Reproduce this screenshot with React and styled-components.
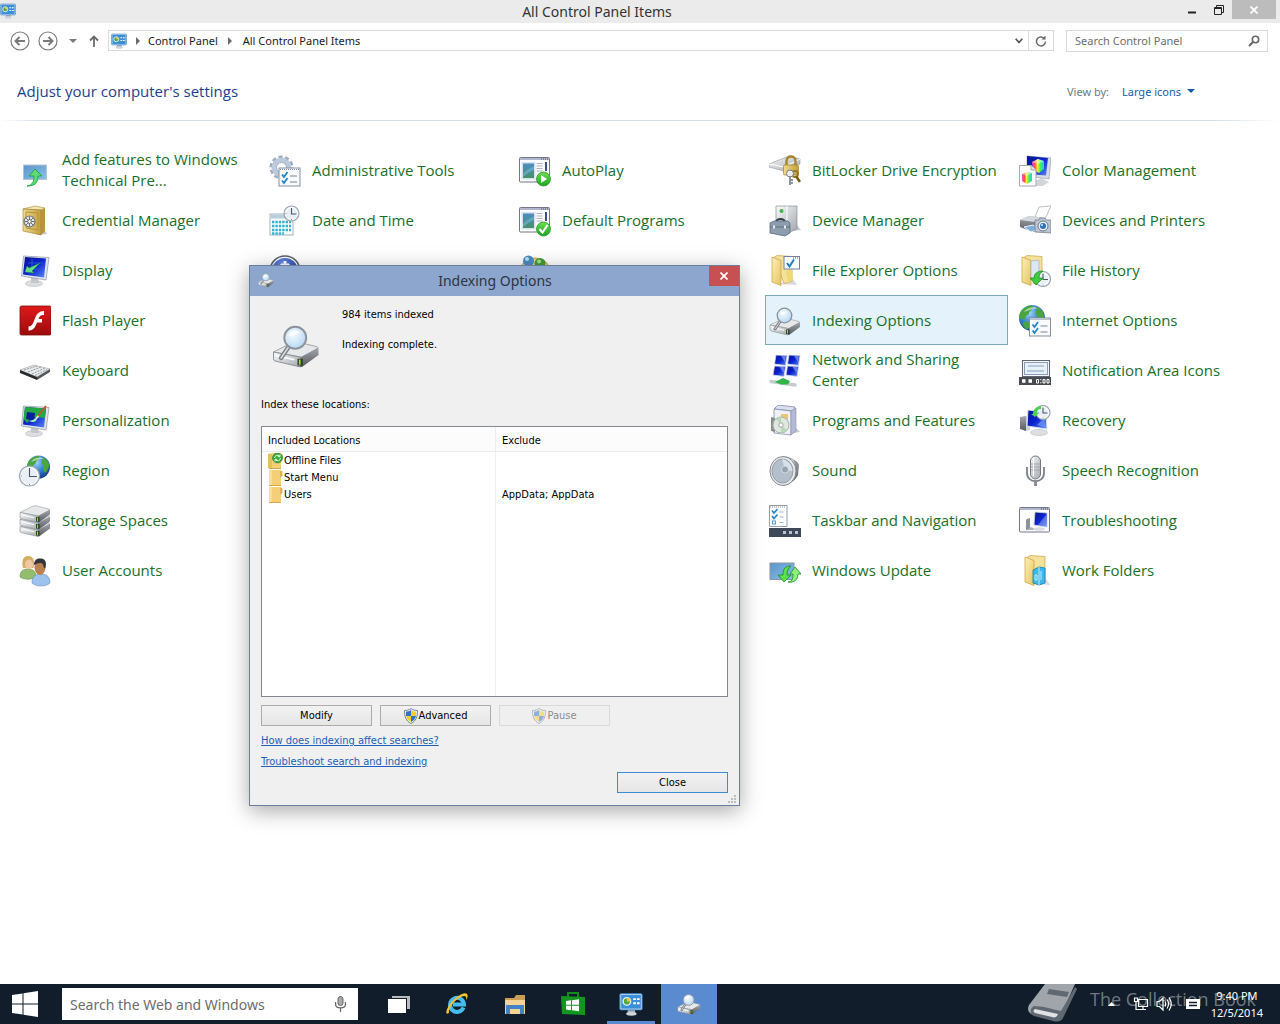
import React from "react";
import styled, { createGlobalStyle, css } from "styled-components";

const ui = `"Noto Sans", "Open Sans", sans-serif`;
const display = `"Open Sans", "Noto Sans", sans-serif`;
const classic = `"DejaVu Sans Condensed", "Noto Sans", sans-serif`;

const GlobalStyle = createGlobalStyle`
  *, *::before, *::after { box-sizing: border-box; }
  html, body { margin: 0; padding: 0; }
  body { font-family: ${ui}; background: #fff; color: #000; overflow: hidden; }
  button, input, select { font: inherit; color: inherit; margin: 0; padding: 0; border: 0; background: none; border-radius: 0; }
  svg { display: block; flex: none; }
`;

/* ---------- shared drawing parts ---------- */

const Defs = () => (
  <svg width="0" height="0" aria-hidden="true">
    <defs>
      <linearGradient id="steel" x1="0" y1="0" x2="1" y2="1">
        <stop offset="0" stopColor="#fafbfc" /><stop offset="1" stopColor="#a3a8ae" />
      </linearGradient>
      <linearGradient id="dark" x1="0" y1="0" x2="0" y2="1">
        <stop offset="0" stopColor="#a4a7ac" /><stop offset="1" stopColor="#565a60" />
      </linearGradient>
      <linearGradient id="sky" x1="0" y1="0" x2="1" y2="1">
        <stop offset="0" stopColor="#5d93cc" /><stop offset="1" stopColor="#86c4e6" />
      </linearGradient>
      <linearGradient id="screen" x1="0" y1="0" x2="1" y2="1">
        <stop offset="0" stopColor="#0a1590" /><stop offset=".5" stopColor="#0b22cf" /><stop offset="1" stopColor="#5d8cf5" />
      </linearGradient>
      <linearGradient id="green" x1="0" y1="0" x2="0" y2="1">
        <stop offset="0" stopColor="#6fdc50" /><stop offset="1" stopColor="#1fa326" />
      </linearGradient>
      <linearGradient id="fold" x1="0" y1="0" x2="1" y2="1">
        <stop offset="0" stopColor="#fdf0b4" /><stop offset="1" stopColor="#e6c463" />
      </linearGradient>
      <linearGradient id="gold" x1="0" y1="0" x2="1" y2="0">
        <stop offset="0" stopColor="#efdc8c" /><stop offset="1" stopColor="#c49d3c" />
      </linearGradient>
      <linearGradient id="flash" x1="0" y1="0" x2="0" y2="1">
        <stop offset="0" stopColor="#e0191b" /><stop offset="1" stopColor="#9c0a0c" />
      </linearGradient>
      <linearGradient id="rainbow" x1="0" y1="0" x2="1" y2="0">
        <stop offset="0" stopColor="#ff4be0" /><stop offset=".25" stopColor="#ff5040" /><stop offset=".45" stopColor="#ffee30" />
        <stop offset=".7" stopColor="#3df05a" /><stop offset="1" stopColor="#25c8ff" />
      </linearGradient>
      <linearGradient id="photo" x1="0" y1="0" x2="0" y2="1">
        <stop offset="0" stopColor="#4d8dc4" /><stop offset="1" stopColor="#47906b" />
      </linearGradient>
      <radialGradient id="globe" cx=".4" cy=".3" r=".75">
        <stop offset="0" stopColor="#9fd6f8" /><stop offset=".5" stopColor="#3a83d4" /><stop offset="1" stopColor="#123a86" />
      </radialGradient>
      <radialGradient id="ball" cx=".4" cy=".25" r=".8">
        <stop offset="0" stopColor="#6b92ee" /><stop offset="1" stopColor="#14298c" />
      </radialGradient>
      <radialGradient id="lens" cx=".4" cy=".35" r=".7">
        <stop offset="0" stopColor="#f4fbff" /><stop offset="1" stopColor="#b6d6f2" />
      </radialGradient>
    </defs>
  </svg>
);

const Clock = ({ x, y, r }) => (
  <g transform={`translate(${x} ${y})`}>
    <circle r={r} fill="#e9eff5" stroke="#9ba6b2" strokeWidth="1.2" />
    <circle r={r - 1.6} fill="none" stroke="#fff" />
    <path d={`M0 ${-r + 2}V0.5H${r - 2.5}`} fill="none" stroke="#4a5765" strokeWidth="1.1" />
    <path d={`M0 ${r - 2}v1M${-r + 1.5} 0h1`} stroke="#7d8996" />
  </g>
);
const Globe = ({ x, y, r }) => (
  <g transform={`translate(${x} ${y}) scale(${r / 11})`}>
    <circle r="11" fill="url(#globe)" />
    <path d="M-9.500-5C-7-9-3-10.500 0-10.500 2-9 0-7-1.500-6S-2-3-4-2.500-5 0-6 1-9 0-10.500 1C-11-1-10.500-3.500-9.500-5ZM4-9.500C7-8.500 10-5 10.500-1 9 1 8.500 4 7 5S4 3 4.500 0 2-3 3-5 3.500-8 4-9.500ZM-6 3C-3 3-1 5-1 6S-3 9-4 9.500-8 6-8 5-7 3-6 3Z" fill="#49a53c" />
    <path d="M-7-5C-4-9 2-10 5-8 1-8-4-6-7-5Z" fill="#fff" opacity=".55" />
  </g>
);
const Checklist = ({ x, y }) => (
  <g transform={`translate(${x} ${y})`}>
    <rect width="21" height="18" fill="#f8fafd" stroke="#848fa3" />
    <path d="M1 1.500h19" stroke="#7a88a8" strokeDasharray="1 1" />
    <path d="M3 6.500l2 2.500 3.500-5M3 12.500l2 2.500 3.500-5" fill="none" stroke="#2086c9" strokeWidth="1.8" />
    <path d="M11 8h7M11 14h7" stroke="#7d8593" strokeWidth="1.2" />
  </g>
);
const Monitor = ({ children }) => (
  <>
    <ellipse cx="15" cy="28.500" rx="8.500" ry="3" fill="#dcdfe2" stroke="#b4b8bd" strokeWidth=".6" />
    <path d="M12 22l7 1 1 5h-8Z" fill="#c3c7cc" />
    <path d="M4.500 1L30 2.500 27 25 2.500 21Z" fill="#dfe4ea" stroke="#9aa1ab" strokeWidth=".8" />
    <path d="M6 2L27 3.500 25 22.500 4 19.500Z" fill="url(#screen)" />
    {children}
  </>
);
const Frame = ({ children }) => (
  <>
    <rect x=".5" y="2.500" width="30" height="24.500" rx="1" fill="#fbfcfe" stroke="#737789" />
    <path d="M1 4h29" stroke="#b3b7cb" strokeWidth="2" />
    <path d="M22 4h7" stroke="#50546a" strokeDasharray="1 1" />
    {children}
  </>
);
const PhotoFrame = ({ children }) => (
  <Frame>
    <rect x="2.500" y="7" width="14" height="17.500" fill="#d9e0ec" />
    <rect x="4" y="8.500" width="11" height="14.500" fill="url(#photo)" />
    <path d="M4 19C8 14 12 13 15 11v4C11 16 7 20 4 22Z" fill="#79b3d8" opacity=".6" />
    <path d="M17.500 8.500h6M17.500 11h6M17.500 13.500h6M17.500 16h6" stroke="#b0b4bd" />
    <path d="M27 7v9" stroke="#384f87" strokeWidth="2" />
    {children}
  </Frame>
);
const FolderShape = () => (
  <>
    <path d="M10 29l18 1-4-6Z" fill="#c9ccd2" opacity=".7" />
    <path d="M5 2.500l3-2 15 1v25l-8 2Z" fill="#f5e29a" stroke="#c7a24b" strokeWidth=".7" />
    <path d="M3 2l9 3.500v25L3 27Z" fill="url(#fold)" stroke="#c59d40" strokeWidth=".7" />
  </>
);
const DriveShape = ({ y = 0 }) => (
  <g transform={`translate(0 ${y})`}>
    <path d="M1 20L13 14Q15 13 17 13.300L30 16.500Q31 17 30 17.800L20 23.500Z" fill="#e6e8ea" stroke="#9a9ea3" strokeWidth=".6" />
    <path d="M1 20l18 3.500v6.500L2 26Q1 25.500 1 24.500Z" fill="url(#steel)" stroke="#85898e" strokeWidth=".6" />
    <path d="M19 23.500l12-6.500v5L20 30H19Z" fill="url(#dark)" />
    <path d="M17 24.500h3.500v4.500H17Z" fill="#2d3a22" /><path d="M18.500 25v3.500" stroke="#8fe03c" strokeWidth="1.2" />
    <path d="M3 22.500l12 2.700" stroke="#fff" />
  </g>
);
const Indexing = () => (
  <>
    <DriveShape />
    <path d="M11.500 16L6 24" stroke="#7c8289" strokeWidth="3" strokeLinecap="round" />
    <path d="M11.500 16L6 24" stroke="#d8dce0" strokeWidth="1" strokeLinecap="round" />
    <circle cx="15.500" cy="10.500" r="7.300" fill="url(#lens)" stroke="#8b939c" strokeWidth="1.300" />
    <path d="M11 9c2-4 6-4 8-2-3 0-5 4-8 2Z" fill="#fff" />
  </>
);
const ControlPanel = () => (
  <>
    <path d="M12 23h9l1 6H11Z" fill="#aab4bf" />
    <ellipse cx="16.500" cy="29" rx="7" ry="2.500" fill="#cfd5db" />
    <rect x="1" y="2" width="30" height="22" rx="2" fill="#a9cdec" stroke="#3272b0" />
    <rect x="3" y="4" width="26" height="18" fill="#3b8fd8" />
    <circle cx="10.500" cy="12.500" r="5" fill="#4fa83e" stroke="#e9f4ff" strokeWidth="1.800" />
    <path d="M10.500 12.500V7.500A5 5 0 0 1 15.500 12.500Z" fill="#f1c84d" />
    <path d="M19 9.500h3.500M24 9.500h3.500M19 15h3.500M24 15h3.500" stroke="#fff" strokeWidth="2.400" />
  </>
);
const People = ({ a, b, ca, cb }) => (
  <>
    <path d="M1 22c0-6 3-8 8-8s8 2 8 8c-4 3-12 3-16 0Z" fill={ca} stroke="#5f8546" strokeWidth=".5" />
    <path d="M4 13C2 4 5 1 9.500 1S16 5 14.500 13Z" fill={a} />
    <ellipse cx="10" cy="9.500" rx="4" ry="5" fill="#efc7a0" />
    <path d="M13 28c0-6 3-9 9-9s9 3 9 9c-4 4-14 4-18 0Z" fill={cb} stroke="#5c7fb0" strokeWidth=".5" />
    <ellipse cx="21" cy="12.500" rx="5.500" ry="7.500" fill="#b98150" />
    <path d="M15 10c0-6 4-7 7-6.500 5 .5 6 5 4 10-2-1-1-4-3-5s-5 0-8 1.500Z" fill={b} />
  </>
);

const glyphs = {
  addFeatures: (
    <>
      <rect x="4.500" y="10" width="23" height="14.500" fill="url(#sky)" stroke="#b9c4cf" />
      <path d="M8 31c6-1 7-5 7-10h-5l6-7 7 7h-4c0 7-3 10-11 10Z" fill="#5fdc78" stroke="#159a38" strokeWidth=".8" />
    </>
  ),
  admin: (
    <>
      <circle cx="12.500" cy="12.500" r="10.500" fill="none" stroke="#9aabbf" strokeWidth="3" strokeDasharray="4 2.600" />
      <circle cx="12.500" cy="12.500" r="7.500" fill="none" stroke="#bccbdb" strokeWidth="5" />
      <circle cx="12.500" cy="12.500" r="5" fill="#fff" stroke="#9aabbf" />
      <Checklist x={10} y={13} />
    </>
  ),
  autoplay: (
    <PhotoFrame>
      <circle cx="24.500" cy="24" r="7" fill="url(#green)" stroke="#2a9a2c" strokeWidth=".8" />
      <path d="M22 20l6 4-6 4Z" fill="#fff" />
    </PhotoFrame>
  ),
  defaults: (
    <PhotoFrame>
      <circle cx="24.500" cy="24" r="7" fill="url(#green)" stroke="#2a9a2c" strokeWidth=".8" />
      <path d="M20.500 24l3 3.500 5-7.500" fill="none" stroke="#fff" strokeWidth="2" />
    </PhotoFrame>
  ),
  bitlocker: (
    <>
      <path d="M0 9L20 1l11 3v5L15 16 0 12Z" fill="url(#steel)" stroke="#9296a0" strokeWidth=".6" />
      <path d="M0 9l15 3 16-8" fill="none" stroke="#fff" />
      <path d="M17.500 11V6c0-6 9-6 9 0v5" fill="none" stroke="#a8852c" strokeWidth="2.400" />
      <rect x="14.500" y="10" width="15" height="10" rx="1.500" fill="url(#gold)" stroke="#a37f28" strokeWidth=".7" />
      <circle cx="26" cy="19" r="3" fill="none" stroke="#9a7824" strokeWidth="1.800" />
      <path d="M27 21l4 6" stroke="#7a5b14" strokeWidth="2.600" />
      <circle cx="21" cy="18.500" r="3.500" fill="#eceef0" stroke="#777d85" />
      <path d="M21 21v9M21 25h3M21 28h3" stroke="#8d939b" strokeWidth="2" />
    </>
  ),
  color: (
    <>
      <path d="M14 27l8-4 8 4-6 4H14Z" fill="#d3d6db" />
      <path d="M8 1L32 3 30 24 8 21Z" fill="#d7dde6" stroke="#9ba3af" strokeWidth=".7" />
      <path d="M8 1L29 3 27 20.500 8 19Z" fill="url(#screen)" />
      <path d="M13 7l6-3 6 2v8l-5 4-6-3Z" fill="url(#rainbow)" />
      <path d="M13 7l6-3 6 2-6 3Z" fill="#fff" opacity=".45" />
      <path d="M.5 10.500H12L17 15v16H.5Z" fill="#fdfdfe" stroke="#a5a9b0" />
      <path d="M12 10.500V15h5" fill="#dfe3e8" stroke="#a5a9b0" />
      <path d="M3 19l5-2 5 1v8l-5 3-5-3Z" fill="url(#rainbow)" />
      <path d="M3 19l5-2 5 1-5 3Z" fill="#fff" opacity=".45" />
    </>
  ),
  credential: (
    <>
      <path d="M18 30l10-1-3-5Z" fill="#c7c7c7" />
      <path d="M4 4L16 1l10 2-4 2Z" fill="#f4e8b0" stroke="#a88a3b" strokeWidth=".6" />
      <path d="M4 4l18 1v25L4 26Z" fill="url(#gold)" stroke="#9b7a2c" strokeWidth=".6" />
      <path d="M22 5l4-2v23l-4 4Z" fill="#b8943f" />
      <path d="M7 7l12 1v17L7 23Z" fill="none" stroke="#b3923e" />
      <circle cx="10.500" cy="16.500" r="5.500" fill="#e4e6e8" stroke="#72777c" strokeWidth="1.200" />
      <path d="M10.500 11.500v10M5.500 16.500h10M7 13l7 7M14 13l-7 7" stroke="#6a6f74" />
      <circle cx="10.500" cy="16.500" r="1.800" fill="#fff" stroke="#666" />
    </>
  ),
  date: (
    <>
      <rect x="1" y="9" width="23" height="21" fill="#fdfefe" stroke="#9fb4c1" />
      <path d="M1.500 9.500h22v4h-22Z" fill="#b7cfdd" />
      <path d="M3 17h19M3 21h19M3 25h19M3 28.500h12" stroke="#34b1cf" strokeWidth="2.400" strokeDasharray="2.400 1" />
      <Clock x={22.500} y={8.500} r={7.500} />
    </>
  ),
  device: (
    <>
      <path d="M20 26l12-1-4-5Z" fill="#c5c8cc" />
      <path d="M7 1h21v23l-7 3H7Z" fill="url(#steel)" stroke="#8b9096" strokeWidth=".7" />
      <path d="M18 1v24" stroke="#fff" /><circle cx="12.500" cy="6" r="2" fill="#43b34a" />
      <path d="M7 17c1-4 8-4 9 0" fill="none" stroke="#333b44" strokeWidth="1.800" />
      <path d="M1 18l4-2h14l2 2v10l-5 3L1 28Z" fill="#8b9dae" stroke="#5b6a78" strokeWidth=".8" />
      <path d="M1 22h20" stroke="#5f6e7c" /><path d="M5 20.500v3M16 20.500v3" stroke="#e5ebf0" strokeWidth="2" />
    </>
  ),
  printers: (
    <>
      <path d="M16 12L20 2l12-1-6 13Z" fill="#fff" stroke="#aab0b9" strokeWidth=".8" />
      <path d="M1 15l9-4 16 2v10l-12 4L1 22Z" fill="url(#dark)" />
      <path d="M1 15l9-4 16 2-10 4Z" fill="#d4d9df" />
      <path d="M5 22l9-2 6 4-8 3Z" fill="#7db0dc" stroke="#eef3f8" />
      <path d="M16 15h4l1-2h5l1 2h5v13l-16-1Z" fill="#bcc5d2" stroke="#6b7686" strokeWidth=".7" />
      <circle cx="24" cy="21" r="5" fill="#eef2f7" stroke="#6a778a" />
      <circle cx="24" cy="21" r="3" fill="#2c6fbd" /><circle cx="23" cy="20" r="1" fill="#d9ecff" />
    </>
  ),
  display: (
    <Monitor>
      <path d="M9 8h15M8 14h15M13 4v14" stroke="#2452d8" strokeWidth="1.200" />
      <path d="M6 17l2-6 2 2 11-5-8 8 2 2Z" fill="#62e07f" stroke="#1b8f3a" strokeWidth=".5" />
    </Monitor>
  ),
  ease: (
    <>
      <circle cx="16" cy="16" r="15" fill="#fff" stroke="#59606c" strokeWidth="1.500" />
      <circle cx="16" cy="16" r="13" fill="url(#ball)" />
      <path d="M16 6v14M12 9l4 4 4-4" stroke="#fff" strokeWidth="3" fill="none" />
    </>
  ),
  family: (
    <>
      <ellipse cx="16" cy="16" rx="15" ry="13" fill="#f1d585" stroke="#c99f3a" />
      <circle cx="9.500" cy="6" r="5.500" fill="#4a8cc4" /><circle cx="8" cy="4" r="2" fill="#b9dcf5" />
      <circle cx="21" cy="8.500" r="5.500" fill="#3f9d3a" /><circle cx="20" cy="6.500" r="2" fill="#a6e08b" />
    </>
  ),
  explorerOptions: (
    <>
      <FolderShape />
      <path d="M17 16l6-1 1 10-5 3Z" fill="#f0d878" />
      <rect x="15" y="1.500" width="15.500" height="12.500" fill="#fafcff" stroke="#7480a0" />
      <path d="M24 3h5" stroke="#50546a" strokeDasharray="1 1" />
      <path d="M18 8l2.500 3.500L25 4.500" fill="none" stroke="#1b7fc4" strokeWidth="2" />
    </>
  ),
  history: (
    <>
      <FolderShape />
      <path d="M12 6l8-1v18l-8 2Z" fill="#dbe7f3" stroke="#93a6bd" strokeWidth=".6" />
      <Clock x={24} y={24} r={7.500} />
      <path d="M11 23h4c0-5 4-7 9-7-3 2-4 4-4 7h4l-7 7Z" fill="#3ecb3e" stroke="#138a1d" strokeWidth=".7" />
    </>
  ),
  flash: (
    <>
      <rect x="1" y="1" width="31" height="29" rx="1.500" fill="url(#flash)" stroke="#7d0d0e" strokeWidth=".8" />
      <path d="M25 6v4c-4 0-4.500 1.500-5.500 4h3.500v3.500h-5C16 23 14 25.500 9.500 25.500v-4c3.500 0 4.500-3 6-7S19 6 25 6Z" fill="#fff" />
    </>
  ),
  indexing: <Indexing />,
  internet: (
    <>
      <Globe x={13} y={13} r={13} />
      <Checklist x={10.500} y={13} />
    </>
  ),
  keyboard: (
    <>
      <path d="M1 15L15 10l16 4-13 8Z" fill="#e8eaec" stroke="#9a9ea3" strokeWidth=".6" />
      <path d="M1 15l17 7v3L1 18Z" fill="#26292d" /><path d="M18 22l13-8v3l-13 8Z" fill="#55595e" />
      <path d="M5 15l13-4M9 17l13-5M13 19l13-6M16 20.500l12-6" stroke="#8b8f95" strokeWidth=".9" strokeDasharray="2 1" />
    </>
  ),
  network: (
    <>
      {[[6, 0], [19, 0], [4.500, 11], [17.500, 11]].map(([x, y]) => (
        <g key={`${x}-${y}`} transform={`translate(${x} ${y})`}>
          <path d="M1 0l11 .5-1.500 10L-.5 9Z" fill="url(#screen)" stroke="#d4dae4" strokeWidth=".8" />
          <path d="M6 1l5 0-1 6Z" fill="#bcd0ff" opacity=".5" />
        </g>
      ))}
      <path d="M2 26.500l24 3.500" stroke="#c6ccd0" strokeWidth="3.500" strokeLinecap="round" />
      <path d="M6 27l8-4 7 3-2 3.500-7 0Z" fill="#32b44a" />
    </>
  ),
  notification: (
    <>
      <rect x="3.500" y="5.500" width="27" height="16" fill="#f5f9fd" stroke="#5e6575" />
      <rect x="5.500" y="7.500" width="23" height="12" fill="#e8f1fa" stroke="#8d9cb8" />
      <path d="M9 11h16M8 16h17" stroke="#7e9dc2" strokeWidth="1.200" />
      <rect x="0" y="22" width="32" height="8" fill="#484c51" />
      <path d="M3 26h3.500M9.500 26H13" stroke="#fff" strokeWidth="3.500" />
      <path d="M17.500 24.500h2v3.500h-2ZM24 24.500h2v3.500h-2ZM28 24.500h2v3.500h-2Z" fill="none" stroke="#fff" />
      <path d="M21.800 24v1.300M21.800 27v1.300" stroke="#fff" />
    </>
  ),
  personalization: (
    <Monitor>
      <path d="M6 2L27 3.500 26 13 14 12 8 18 4.500 14Z" fill="#22a844" />
      <path d="M8 7l8 1-1 8-8-2Z" fill="#0a1f9a" />
      <path d="M10 16c3-1 5-1 6-3l2 1c-1 3-4 4-8 2Z" fill="#a3efc0" />
      <path d="M19 11L27 1" stroke="#c5542c" strokeWidth="2" /><path d="M17 13.500l2.500-2.500" stroke="#e5d9cf" strokeWidth="2" />
    </Monitor>
  ),
  programs: (
    <>
      <path d="M20 29l11-2-4-4Z" fill="#c6c8d0" />
      <path d="M5 4l4-4 17 2-2 4Z" fill="#dbe0f0" stroke="#8489a5" strokeWidth=".8" />
      <path d="M5 4l17 2v24L5 28Z" fill="#eff1f9" stroke="#888dab" strokeWidth=".8" />
      <path d="M22 6l5-3v23l-5 4Z" fill="#b4b9d6" stroke="#888dab" strokeWidth=".6" />
      <rect x="12" y="9" width="7" height="8" fill="#edc375" />
      <path d="M2 12l4 1v14l-4-1Z" fill="#8a8f8c" />
      <circle cx="12" cy="20" r="8" fill="#dfe8e0" stroke="#a7b1ac" />
      <path d="M12 20L7 14a8 8 0 0 1 5-2ZM12 20l6 5a8 8 0 0 1-6 3Z" fill="#b9d9b6" />
      <circle cx="12" cy="20" r="2.200" fill="#fff" stroke="#9aa59f" />
    </>
  ),
  recovery: (
    <>
      <path d="M1 12l6-1v15l-6-2Z" fill="url(#dark)" /><path d="M7 11l4 1v13l-4 1Z" fill="#cdd2d8" />
      <ellipse cx="20" cy="27.500" rx="8.500" ry="3" fill="#dcdfe3" stroke="#b3b8be" strokeWidth=".6" />
      <path d="M9 5l18 2 1 17-20-3Z" fill="url(#screen)" stroke="#d9dfe7" />
      <path d="M18 20l8-8 1 11Z" fill="#7da2f7" opacity=".6" />
      <Clock x={24} y={7.500} r={7} />
      <path d="M14 9c0-5 4-8 8-8v3c-3 0-4 2-4 4h2l-4 4-4-3Z" fill="#4cd054" />
    </>
  ),
  region: (
    <>
      <Globe x={19.500} y={12} r={11.500} />
      <Clock x={10.500} y={21} r={10} />
    </>
  ),
  sound: (
    <>
      <path d="M14 1C22 2 29 6 30 10l-1 10c-2 5-8 9-15 11Z" fill="url(#dark)" />
      <path d="M22 4c5 4 5 19-1 24" fill="none" stroke="#e5e7ea" strokeWidth="1.500" />
      <ellipse cx="14" cy="16" rx="13" ry="14.500" fill="#e7eaed" stroke="#858b91" />
      <ellipse cx="13.500" cy="16" rx="10.500" ry="12" fill="#b3c0cc" stroke="#949ca4" />
      <path d="M13 4c6 1 10 6 10.500 12L16 15Z" fill="#d6e0e9" />
      <circle cx="16" cy="14.500" r="3.500" fill="#97a3af" stroke="#eff3f6" strokeWidth=".6" />
    </>
  ),
  speech: (
    <>
      <path d="M8 12v6c0 11 17 11 17 0v-6" fill="none" stroke="#7e8087" strokeWidth="1.800" />
      <path d="M16.500 25v6" stroke="#8b8e95" strokeWidth="3" />
      <rect x="11.500" y="1" width="10" height="23" rx="5" fill="url(#steel)" stroke="#74777f" />
      <path d="M12 9h9M12 12h9M12 15h9" stroke="#9a9da6" strokeWidth=".9" />
      <path d="M14.500 3v18" stroke="#fff" />
    </>
  ),
  storage: (
    <>
      <DriveShape y={1.500} /><DriveShape y={-5.500} /><DriveShape y={-12.500} />
    </>
  ),
  taskbar: (
    <>
      <path d="M.5.5H18V21.500H.5Z" fill="#fcfdff" stroke="#969cab" />
      <path d="M1 2h16" stroke="#8990a4" strokeDasharray="1 1" />
      <path d="M3 5.500l2 2.500 3.500-4M3 11l2 2.500 3.500-4" fill="none" stroke="#2086c9" strokeWidth="1.600" />
      <rect x="3.500" y="16" width="3" height="3" fill="none" stroke="#4c9fd0" />
      <path d="M10.500 7h4M10.500 12h4M10.500 17.500h4" stroke="#a8adb7" />
      <rect x="0" y="23" width="32" height="9" fill="#3e4858" />
      <path d="M14 27.500h3M20 27.500h3M26 27.500h3" stroke="#b7c1cf" strokeWidth="3" />
    </>
  ),
  troubleshooting: (
    <Frame>
      <path d="M8 14l3-1v12H7V15Z" fill="#8b9198" />
      <path d="M16 7l12 1v14l-13-2Z" fill="url(#screen)" stroke="#cbd2db" strokeWidth="0.800" />
      <path d="M19 20l8-10v12Z" fill="#a7befa" opacity=".4" />
      <path d="M11 22l10 3H8Z" fill="#aab0b6" /><ellipse cx="20" cy="24" rx="6" ry="1.800" fill="#d9dde2" />
    </Frame>
  ),
  users: <People a="#d2ae62" b="#33343a" ca="#93bd6c" cb="#9cc3ee" />,
  update: (
    <>
      <rect x="1" y="8" width="24" height="16.500" fill="url(#sky)" stroke="#8d97a2" />
      <path d="M22 11c-6 0-8 3-8 9H9l6 7 7-7h-4c0-4 1-7 4-9Z" fill="#5ce04d" stroke="#178c20" strokeWidth=".8" />
      <path d="M19 27c4 0 5-3 5-8h-3l5-7 6 7h-3c0 6-4 9-10 8Z" fill="#8df07b" stroke="#178c20" strokeWidth=".8" />
    </>
  ),
  work: (
    <g transform="translate(3 0)">
      <FolderShape />
      <path d="M11 15l6-3 6 1v15l-6 2-6-2Z" fill="#40b7ea" stroke="#1678ae" strokeWidth=".8" />
      <path d="M17 12v18M13 20h2v5h-2ZM19 16v9" stroke="#bfeaff" fill="none" />
    </g>
  ),
  control: <ControlPanel />,
};

const Glyph = ({ name, size = 32 }) => (
  <svg width={size} height={size} viewBox="0 0 32 32" aria-hidden="true">{glyphs[name]}</svg>
);

const FolderSmall = ({ sync }) => (
  <svg width="16" height="16" viewBox="0 0 16 16" aria-hidden="true">
    <path d="M1 0h12v16H1Z" fill="#f4cf78" /><path d="M1 0h3v16H1Z" fill="#f9de9b" />
    <path d="M12 1h2.500v5L12 8Z" fill="#dfb256" /><path d="M1 15.500h12" stroke="#d6a748" />
    {sync && (
      <>
        <path d="M0 1h4v14H0Z" fill="#e1c25e" />
        <circle cx="9.500" cy="5" r="5" fill="#36a93a" stroke="#1d7d24" strokeWidth=".6" />
        <path d="M6.500 5a3 3 0 0 1 5-2M12.500 5a3 3 0 0 1-5 2M12 1.500v2.200H9.800M7 8.500V6.300h2.200" fill="none" stroke="#eaffea" />
      </>
    )}
  </svg>
);
const Shield = () => (
  <svg width="14" height="16" viewBox="0 0 14 16" aria-hidden="true">
    <path d="M7 .5C9 2 11 2.500 13.500 2.500 13.500 9 12 13 7 15.500 2 13 .5 9 .5 2.500 3 2.500 5 2 7 .5Z" fill="#f2f5f9" stroke="#77838f" />
    <path d="M7 2C5.500 3 4 3.500 2 3.600V8H7Z" fill="#2f73c9" /><path d="M7 2c1.500 1 3 1.500 5 1.600V8H7Z" fill="#f5cd2f" />
    <path d="M2 8h5v6C4 12.500 2.500 10.500 2 8Z" fill="#f5cd2f" /><path d="M12 8H7v6c3-1.500 4.500-3.500 5-6Z" fill="#2f73c9" />
  </svg>
);

/* ---------- desktop and main window ---------- */

const Desktop = styled.div`
  position: relative;
  display: flex;
  flex-direction: column;
  height: 100vh;
`;
const MainWindow = styled.div`
  flex: 1;
  display: flex;
  flex-direction: column;
  min-height: 0;
  background: #fff;
`;
const TitleBar = styled.header`
  display: flex;
  align-items: flex-start;
  height: 23px;
  background: #ebebeb;
  padding-right: 4px;
`;
const TitleIcon = styled.span`
  padding-top: 3px;
`;
const WindowTitle = styled.h1`
  flex: 1;
  margin: 0;
  font-size: 14px;
  line-height: 23px;
  font-weight: 400;
  text-align: center;
  color: #333;
`;
const CaptionButton = styled.button`
  display: flex;
  align-items: center;
  justify-content: center;
  width: ${(p) => (p.$close ? 44 : 27)}px;
  height: 19px;
  background: ${(p) => (p.$close ? "#bcbcbc" : "transparent")};
`;
const NavBar = styled.nav`
  display: flex;
  align-items: flex-start;
  padding: 7px 12px 0 9px;
`;
const NavButton = styled.button`
  display: flex;
  align-items: center;
  justify-content: center;
  width: ${(p) => p.$w}px;
  height: 21px;
`;
const AddressBar = styled.div`
  flex: 1;
  display: flex;
  align-items: center;
  height: 21px;
  border: 1px solid #d9d9d9;
  padding-left: 2px;
`;
const Crumb = styled.button`
  font-size: 11px;
  line-height: 19px;
  color: #1a1a1a;
  white-space: nowrap;
`;
const CrumbArrow = styled.span`
  display: flex;
  justify-content: center;
  width: ${(p) => p.$w}px;
`;
const AddressButton = styled.button`
  display: flex;
  align-items: center;
  justify-content: center;
  width: ${(p) => (p.$line ? 25 : 18)}px;
  height: 19px;
  margin-left: ${(p) => (p.$push ? "auto" : 0)};
  border-left: ${(p) => (p.$line ? "1px solid #d9d9d9" : 0)};
`;
const SearchBox = styled.label`
  display: flex;
  align-items: center;
  width: 202px;
  height: 22px;
  margin-left: 12px;
  padding: 0 7px 1px 8px;
  border: 1px solid #d9d9d9;
`;
const SearchInput = styled.input`
  flex: 1;
  min-width: 0;
  outline: none;
  font-size: ${(p) => p.$size}px;
  &::placeholder { color: #6d6d6d; opacity: 1; }
`;
const Heading = styled.div`
  display: flex;
  align-items: center;
  justify-content: space-between;
  height: 68px;
  padding: 10px 85px 0 17px;
`;
const HeadingText = styled.h2`
  margin: 0;
  font-family: ${display};
  font-size: 15px;
  line-height: 22px;
  font-weight: 400;
  color: #1b418c;
`;
const ViewBy = styled.label`
  display: flex;
  align-items: center;
  font-size: 11px;
  color: #6d7a85;
  gap: 13px;
`;
const ViewSelectWrap = styled.span`
  display: flex;
  align-items: center;
  gap: 5px;
`;
const ViewSelect = styled.select`
  appearance: none;
  color: #0f5cad;
`;
const Rule = styled.hr`
  width: 100%;
  height: 1px;
  margin: 0 0 24px;
  flex: none;
  border: 0;
  background: linear-gradient(90deg, #fff, #d3dfe8 3%, #d3dfe8 95%, #fff);
`;
const ItemGrid = styled.main`
  display: grid;
  grid-template-columns: repeat(auto-fill, 250px);
  grid-auto-rows: 50px;
  padding-left: 15px;
`;
const Item = styled.a`
  grid-column-start: ${(p) => p.$col};
  display: flex;
  align-items: center;
  gap: 11px;
  width: 243px;
  padding: 0 3px;
  border: 1px solid ${(p) => (p.$active ? "#7da8c3" : "transparent")};
  background: ${(p) => (p.$active ? "#e3f2fb" : "transparent")};
  color: #19702a;
  font-family: ${display};
  font-size: 15px;
  line-height: 21px;
  text-decoration: none;
`;
const ItemIcon = styled.span`
  padding-top: 2px;
`;

/* ---------- dialog ---------- */

const Dialog = styled.section`
  position: absolute;
  left: 249px;
  top: 265px;
  width: 491px;
  border: 1px solid #6a7f9f;
  background: #f0f0f0;
  box-shadow: 0 5px 20px rgba(0, 0, 0, 0.34);
  font-family: ${classic};
  font-size: 11px;
  line-height: 16px;
`;
const DialogBar = styled.header`
  display: flex;
  align-items: flex-start;
  height: 30px;
  padding-left: 8px;
  background: #8ca6cd;
`;
const DialogIcon = styled.span`
  padding-top: 6px;
`;
const DialogTitle = styled.h2`
  flex: 1;
  margin: 0;
  padding-left: 7px;
  font-family: ${ui};
  font-size: 14px;
  line-height: 30px;
  font-weight: 400;
  text-align: center;
  color: #2c3544;
`;
const DialogClose = styled.button`
  display: flex;
  align-items: center;
  justify-content: center;
  width: 30px;
  height: 20px;
  background: #c75050;
`;
const DialogBody = styled.div`
  display: flex;
  flex-direction: column;
  padding: 11px 11px 12px;
`;
const Summary = styled.div`
  display: flex;
  align-items: flex-start;
  gap: 22px;
  padding-left: 11px;
`;
const SummaryIcon = styled.span`
  padding: 15px 0 27px;
`;
const SummaryText = styled.div`
  display: flex;
  flex-direction: column;
  gap: 14px;
`;
const Locations = styled.table`
  width: 467px;
  height: 271px;
  margin-top: 13px;
  border: 1px solid #828790;
  border-collapse: separate;
  border-spacing: 0;
  table-layout: fixed;
  background: #fff;
  text-align: left;
`;
const HeadCell = styled.th`
  width: ${(p) => (p.$first ? "234px" : "auto")};
  height: 25px;
  padding: 3px 6px 0;
  font-weight: 400;
  background: #fcfcfc;
  border-bottom: 1px solid #ececec;
  border-right: ${(p) => (p.$first ? "1px solid #e8edf3" : 0)};
`;
const Cell = styled.td`
  height: ${(p) => (p.$fill ? "auto" : "17px")};
  padding: ${(p) => (p.$first ? 0 : 1)}px 6px 0;
  border-right: ${(p) => (p.$first ? "1px solid #edf1f6" : 0)};
`;
const LocationName = styled.span`
  display: flex;
  align-items: center;
  height: 17px;
  line-height: 18px;
`;
const ButtonRow = styled.div`
  display: flex;
  gap: 8px;
  margin: 8px 0 4px;
  justify-content: ${(p) => (p.$end ? "flex-end" : "flex-start")};
  ${(p) => p.$end && css`margin: 0;`}
`;
const PushButton = styled.button`
  display: flex;
  align-items: center;
  justify-content: center;
  gap: 1px;
  width: 111px;
  height: 21px;
  padding-top: 1px;
  border: 1px solid ${(p) => (p.$primary ? "#3c8ad8" : "#acacac")};
  background: linear-gradient(#f2f2f2, #e6e6e6);
  &:disabled {
    border-color: #d9d9d9;
    background: #efefef;
    color: #8b8b8b;
  }
  &:disabled svg { opacity: 0.5; }
`;
const HelpLink = styled.a`
  align-self: flex-start;
  line-height: 21px;
  color: #1a5fb8;
`;
const Grip = styled.svg`
  position: absolute;
  right: 3px;
  bottom: 2px;
`;

/* ---------- taskbar ---------- */

const Taskbar = styled.footer`
  position: relative;
  display: flex;
  align-items: center;
  height: 40px;
  background: #111d2b;
  color: #fff;
`;
const StartButton = styled.button`
  display: flex;
  align-items: center;
  justify-content: center;
  width: 50px;
  height: 40px;
`;
const TaskSearch = styled.label`
  display: flex;
  align-items: center;
  width: 296px;
  height: 32px;
  margin: 0 13px 0 12px;
  padding: 0 12px 0 8px;
  background: #fff;
`;
const TaskButtons = styled.div`
  display: flex;
  gap: 2px;
  flex: 1;
`;
const TaskButton = styled.button`
  display: flex;
  align-items: center;
  justify-content: center;
  width: 56px;
  height: 40px;
  background: ${(p) =>
    p.$active ? "#5a8bd0" : p.$running ? "linear-gradient(#5a8bd0, #5a8bd0) center bottom / 48px 3px no-repeat" : "none"};
`;
const Tray = styled.div`
  position: relative;
  display: flex;
  align-items: center;
  gap: 7px;
  padding-right: 17px;
`;
const TrayButton = styled.button`
  display: flex;
  padding: 0 ${(p) => p.$after || 0}px 0 ${(p) => p.$before || 0}px;
`;
const TrayClock = styled.time`
  padding-left: 4px;
  font-size: 11px;
  line-height: 17px;
  text-align: center;
`;
const Watermark = styled.div`
  position: absolute;
  right: 24px;
  top: 0;
  display: flex;
  align-items: center;
  gap: 12px;
  height: 40px;
  padding-bottom: 10px;
  color: #6f7880;
  font-family: ${display};
  font-size: 18px;
  pointer-events: none;
`;
const WatermarkLogo = styled.svg`
  align-self: flex-start;
`;

const items = [
  ["Add features to Windows Technical Pre...", "addFeatures"],
  ["Administrative Tools", "admin"],
  ["AutoPlay", "autoplay"],
  ["BitLocker Drive Encryption", "bitlocker"],
  ["Color Management", "color"],
  ["Credential Manager", "credential"],
  ["Date and Time", "date"],
  ["Default Programs", "defaults"],
  ["Device Manager", "device"],
  ["Devices and Printers", "printers"],
  ["Display", "display"],
  ["Ease of Access Center", "ease", "auto", true],
  ["Family Safety", "family", "auto", true],
  ["File Explorer Options", "explorerOptions"],
  ["File History", "history"],
  ["Flash Player", "flash"],
  ["Indexing Options", "indexing", 4],
  ["Internet Options", "internet"],
  ["Keyboard", "keyboard"],
  ["Network and Sharing Center", "network", 4],
  ["Notification Area Icons", "notification"],
  ["Personalization", "personalization"],
  ["Programs and Features", "programs", 4],
  ["Recovery", "recovery"],
  ["Region", "region"],
  ["Sound", "sound", 4],
  ["Speech Recognition", "speech"],
  ["Storage Spaces", "storage"],
  ["Taskbar and Navigation", "taskbar", 4],
  ["Troubleshooting", "troubleshooting"],
  ["User Accounts", "users"],
  ["Windows Update", "update", 4],
  ["Work Folders", "work"],
];

const locations = [
  { name: "Offline Files", exclude: "", sync: true },
  { name: "Start Menu", exclude: "" },
  { name: "Users", exclude: "AppData; AppData" },
];

const Triangle = () => (
  <svg width="4" height="8" viewBox="0 0 4 8"><path d="M0 0l4 4-4 4Z" fill="#6b6b6b" /></svg>
);
const Cross = ({ size }) => (
  <svg width={size} height={size} viewBox="0 0 8 8"><path d="M.5.5l7 7M7.500.5l-7 7" stroke="#fff" strokeWidth="1.700" /></svg>
);

export default function App() {
  return (
    <Desktop>
      <GlobalStyle />
      <MainWindow>
        <TitleBar>
          <TitleIcon><Glyph name="control" size={16} /></TitleIcon>
          <WindowTitle>All Control Panel Items</WindowTitle>
          <CaptionButton aria-label="Minimize">
            <svg width="8" height="9"><path d="M0 7.500h8" stroke="#222" strokeWidth="2" /></svg>
          </CaptionButton>
          <CaptionButton aria-label="Restore">
            <svg width="10" height="10"><path d="M2.500 2V.5h7v7H8" fill="none" stroke="#222" /><path d="M.5 2.500h7v7h-7ZM.5 3.500h7" fill="none" stroke="#222" /></svg>
          </CaptionButton>
          <CaptionButton $close aria-label="Close window"><Cross size={8} /></CaptionButton>
        </TitleBar>

        <NavBar>
          <NavButton $w={21} aria-label="Back">
            <svg width="20" height="20"><circle cx="10" cy="10" r="9" fill="none" stroke="#7a7a7a" strokeWidth="1.200" /><path d="M15 10H6M9.500 6L5.500 10l4 4" fill="none" stroke="#7a7a7a" strokeWidth="2" /></svg>
          </NavButton>
          <NavButton $w={36} aria-label="Forward">
            <svg width="20" height="20"><circle cx="10" cy="10" r="9" fill="none" stroke="#7a7a7a" strokeWidth="1.200" /><path d="M5 10h9M10.500 6l4 4-4 4" fill="none" stroke="#7a7a7a" strokeWidth="2" /></svg>
          </NavButton>
          <NavButton $w={14} aria-label="Recent locations">
            <svg width="8" height="4"><path d="M0 0h8L4 4Z" fill="#7a7a7a" /></svg>
          </NavButton>
          <NavButton $w={28} aria-label="Up">
            <svg width="10" height="12"><path d="M5 12V1.500M1 5.500L5 1.500l4 4" fill="none" stroke="#6b6b6b" strokeWidth="1.800" /></svg>
          </NavButton>
          <AddressBar>
            <Glyph name="control" size={16} />
            <CrumbArrow $w={21}><Triangle /></CrumbArrow>
            <Crumb>Control Panel</Crumb>
            <CrumbArrow $w={25}><Triangle /></CrumbArrow>
            <Crumb>All Control Panel Items</Crumb>
            <AddressButton $push aria-label="Previous locations">
              <svg width="8" height="6"><path d="M.7.7L4 4.500 7.300.7" fill="none" stroke="#555" strokeWidth="1.700" /></svg>
            </AddressButton>
            <AddressButton $line aria-label="Refresh">
              <svg width="12" height="12"><path d="M9.800 4A4.500 4.500 0 1 0 10.500 6.500" fill="none" stroke="#6b6b6b" strokeWidth="1.500" /><path d="M6.500 4.500h4V.5Z" fill="#6b6b6b" /></svg>
            </AddressButton>
          </AddressBar>
          <SearchBox>
            <SearchInput $size={11} aria-label="Search Control Panel" placeholder="Search Control Panel" />
            <svg width="12" height="12"><circle cx="7.500" cy="4.500" r="3.200" fill="none" stroke="#666" strokeWidth="1.600" /><path d="M5.200 6.800L1 11" stroke="#666" strokeWidth="2" /></svg>
          </SearchBox>
        </NavBar>

        <Heading>
          <HeadingText>Adjust your computer's settings</HeadingText>
          <ViewBy>
            View by:
            <ViewSelectWrap>
              <ViewSelect defaultValue="large"><option value="large">Large icons</option></ViewSelect>
              <svg width="8" height="4"><path d="M0 0h8L4 4Z" fill="#0f5cad" /></svg>
            </ViewSelectWrap>
          </ViewBy>
        </Heading>
        <Rule />
        <ItemGrid>
          {items.map(([label, icon, col, iconOnly]) => (
            <Item key={label} href="#" aria-label={label} $col={col} $active={icon === "indexing"}>
              <ItemIcon><Glyph name={icon} /></ItemIcon>
              {!iconOnly && <span>{label}</span>}
            </Item>
          ))}
        </ItemGrid>
      </MainWindow>

      <Dialog role="dialog" aria-labelledby="dialog-title">
        <DialogBar>
          <DialogIcon><Glyph name="indexing" size={16} /></DialogIcon>
          <DialogTitle id="dialog-title">Indexing Options</DialogTitle>
          <DialogClose aria-label="Close dialog"><Cross size={8} /></DialogClose>
        </DialogBar>
        <DialogBody>
          <Summary>
            <SummaryIcon><Glyph name="indexing" size={48} /></SummaryIcon>
            <SummaryText>
              <span>984 items indexed</span>
              <span>Indexing complete.</span>
            </SummaryText>
          </Summary>
          <span id="locations-label">Index these locations:</span>
          <Locations aria-labelledby="locations-label">
            <thead>
              <tr><HeadCell $first>Included Locations</HeadCell><HeadCell>Exclude</HeadCell></tr>
            </thead>
            <tbody>
              {locations.map((l) => (
                <tr key={l.name}>
                  <Cell $first><LocationName><FolderSmall sync={l.sync} />{l.name}</LocationName></Cell>
                  <Cell>{l.exclude}</Cell>
                </tr>
              ))}
              <tr><Cell $first $fill /><Cell $fill /></tr>
            </tbody>
          </Locations>
          <ButtonRow>
            <PushButton>Modify</PushButton>
            <PushButton><Shield />Advanced</PushButton>
            <PushButton disabled><Shield />Pause</PushButton>
          </ButtonRow>
          <HelpLink href="#">How does indexing affect searches?</HelpLink>
          <HelpLink href="#">Troubleshoot search and indexing</HelpLink>
          <ButtonRow $end><PushButton $primary>Close</PushButton></ButtonRow>
        </DialogBody>
        <Grip width="8" height="8"><path d="M6 0h2v2H6ZM3 3h2v2H3ZM6 3h2v2H6ZM0 6h2v2H0ZM3 6h2v2H3ZM6 6h2v2H6Z" fill="#bdbdbd" /></Grip>
      </Dialog>

      <Taskbar>
        <StartButton aria-label="Start">
          <svg width="26" height="26" viewBox="0 0 26 26"><path d="M0 4l10.500-1.500v10H0ZM11.500 2.300L26 0v12.500H11.500ZM0 13.500h10.500v10L0 22ZM11.500 13.500H26V26l-14.500-2.300Z" fill="#fff" /></svg>
        </StartButton>
        <TaskSearch>
          <SearchInput $size={14} aria-label="Search the Web and Windows" placeholder="Search the Web and Windows" />
          <svg width="11" height="16"><rect x="3" y=".5" width="5" height="9" rx="2.500" fill="#aaa" stroke="#666" /><path d="M.6 6v2.500c0 4.500 9.800 4.500 9.800 0V6M5.500 12v4" fill="none" stroke="#666" strokeWidth="1.200" /></svg>
        </TaskSearch>
        <TaskButtons>
          <TaskButton aria-label="Task view">
            <svg width="22" height="18"><path d="M4 1h18v13h-3V3H4Z" fill="#b8bcc1" /><path d="M0 4h18v14H0Z" fill="#fff" /></svg>
          </TaskButton>
          <TaskButton aria-label="Internet Explorer">
            <svg width="24" height="24" viewBox="0 0 24 24">
              <path d="M18.500 15.500A7 7 0 1 1 19 12.500H8" fill="none" stroke="#45bdf0" strokeWidth="4" />
              <path d="M4 21C0 24 .5 18 5 12S19-1 22 2c1.500 2 0 5-1 6 1-5-2-5-7-2S3 17 4 21Z" fill="#f8c231" />
            </svg>
          </TaskButton>
          <TaskButton aria-label="File Explorer">
            <svg width="22" height="22" viewBox="0 0 22 22"><path d="M1 5h9l2-3h9v16H1Z" fill="#c99d55" /><path d="M1 7h20v14H1Z" fill="#f3d593" /><path d="M2 21v-9h18v9h-4v-5H6v5Z" fill="#4183c8" /></svg>
          </TaskButton>
          <TaskButton aria-label="Store">
            <svg width="24" height="24" viewBox="0 0 24 24"><path d="M7 6V1h10v5" fill="none" stroke="#0f8f1a" strokeWidth="2" /><path d="M0 4l24 1v18L1 22Z" fill="#12961d" /><path d="M5 9l5-.7v4.400H5ZM11 8.200l7-1v5.500h-7ZM5 13.700h5v4.500l-5-.7ZM11 13.700h7v5.600l-7-1Z" fill="#fff" /></svg>
          </TaskButton>
          <TaskButton $running aria-label="Control Panel"><Glyph name="control" size={24} /></TaskButton>
          <TaskButton $active aria-label="Indexing Options"><Glyph name="indexing" size={24} /></TaskButton>
        </TaskButtons>
        <Watermark>
          <WatermarkLogo width="50" height="38" viewBox="0 0 50 38">
            <path d="M17 0H47L34 29C32 34 28 36 23 35L5 31C0 29-1 25 1 21Z" fill="#a0a5ab" />
            <path d="M21 5l20 3-2 5-20-3ZM6 22c9 0 17 3 27 5l14-24 2 2-14 29c-2 4-6 4-10 3L6 32C1 30 2 24 6 22Z" fill="#606972" />
            <path d="M7 25l23 5c-1 3-3 4-6 3L7 29c-2-1-2-3 0-4Z" fill="#e0e2e4" />
          </WatermarkLogo>
          <span>The Collection Book</span>
        </Watermark>
        <Tray>
          <TrayButton $after={11} aria-label="Show hidden icons"><svg width="7" height="4"><path d="M0 4h7L3.500 0Z" fill="#fff" /></svg></TrayButton>
          <TrayButton aria-label="Network">
            <svg width="16" height="16"><path d="M5.500 3.500h9v7h-9ZM7 13.500h6M10 11v2.500M1.500 2h3v3.500h-3ZM3 6v7.500h4" fill="none" stroke="#fff" strokeWidth="1.200" /></svg>
          </TrayButton>
          <TrayButton $after={7} aria-label="Volume">
            <svg width="16" height="16"><path d="M1 5.500h2.500L7 2v12L3.500 10.500H1Z" fill="none" stroke="#fff" strokeWidth="1.200" /><path d="M9 5.500q1.500 2.500 0 5M11 3.500q3 4.500 0 9M13 1.500q4.500 6.500 0 13" fill="none" stroke="#fff" strokeWidth="1.200" /></svg>
          </TrayButton>
          <TrayButton aria-label="Notifications">
            <svg width="14" height="12"><path d="M0 1h14v10H0Z" fill="#fff" /><path d="M3 4.500h8M3 7.500h8" stroke="#111d2b" strokeWidth="1.300" /></svg>
          </TrayButton>
          <TrayClock>9:40 PM<br />12/5/2014</TrayClock>
        </Tray>
      </Taskbar>
      <Defs />
    </Desktop>
  );
}
